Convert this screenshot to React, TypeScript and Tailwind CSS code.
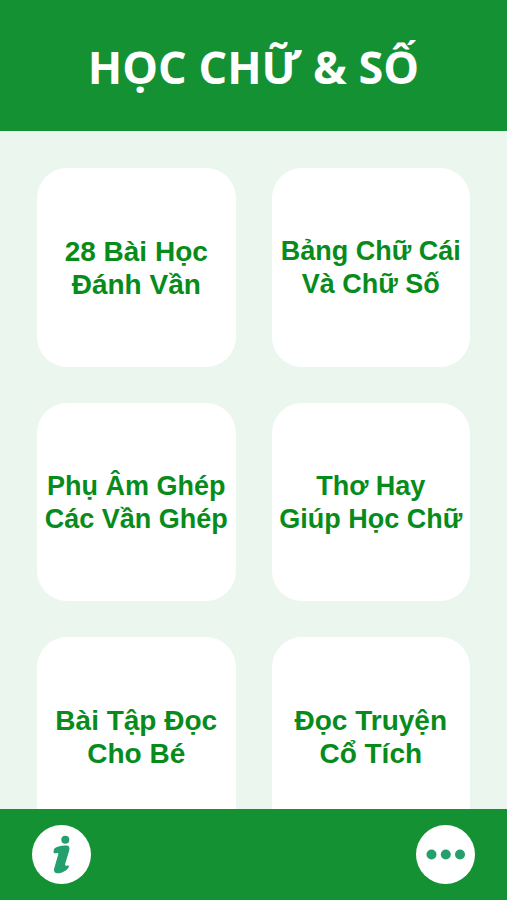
type Lesson = { lines: [string, string]; wide?: boolean };

const lessons: Lesson[] = [
  { lines: ["28 Bài Học", "Đánh Vần"] },
  { lines: ["Bảng Chữ Cái", "Và Chữ Số"], wide: true },
  { lines: ["Phụ Âm Ghép", "Các Vần Ghép"], wide: true },
  { lines: ["Thơ Hay", "Giúp Học Chữ"], wide: true },
  { lines: ["Bài Tập Đọc", "Cho Bé"] },
  { lines: ["Đọc Truyện", "Cổ Tích"] },
];

function LessonCard({ lines, wide }: Lesson) {
  const size = wide ? "text-[27px]" : "text-[28px]";
  return (
    <button
      type="button"
      className={`flex aspect-square flex-col items-center justify-center rounded-[30px] bg-white pt-[2px] leading-[33px] font-bold whitespace-nowrap text-[#078c1c] ${size}`}
    >
      <span>{lines[0]}</span>
      <span>{lines[1]}</span>
    </button>
  );
}

function InfoIcon() {
  return (
    <svg viewBox="0 0 59 59" className="size-full" fill="#23a06c" aria-hidden="true">
      <circle cx="33.3" cy="14.8" r="4" />
      <path d="M23 23C26 20.8 31.5 20 35.2 20.6C37.3 21.1 37.8 23 37.2 25.4L33.2 38.8C32.9 40.4 33.6 40.9 34.6 40.7C36 40.5 37.4 40.6 36.8 42C35.3 45.6 29 48.8 24.8 48.2C22 47.6 21.6 45.3 22.3 43L26.2 29.4C26.5 28.3 26 27.9 25 28.1C23.3 28.5 21.7 28.6 21.6 26.9C21.5 25.5 22 24 23 23Z" />
    </svg>
  );
}

function MoreIcon() {
  return (
    <svg viewBox="0 0 59 59" className="size-full" fill="#23a06c" aria-hidden="true">
      <circle cx="15.5" cy="29.5" r="5" />
      <circle cx="29.8" cy="29.5" r="5" />
      <circle cx="44" cy="29.5" r="5" />
    </svg>
  );
}

export default function App() {
  return (
    <div className="flex h-screen flex-col bg-[#eaf6ee] font-['Liberation_Sans',Arial,sans-serif]">
      <header className="flex h-[131px] shrink-0 items-center justify-center bg-[#149133] pt-[2px]">
        <h1 className="font-['Open_Sans','Noto_Sans',sans-serif] text-[45px] leading-[64px] font-bold whitespace-nowrap text-white">
          HỌC CHỮ &amp; SỐ
        </h1>
      </header>

      <main className="min-h-0 flex-1 overflow-y-auto p-[37px] [scrollbar-width:none]">
        <div className="grid grid-cols-2 gap-9">
          {lessons.map((lesson) => (
            <LessonCard key={lesson.lines[0]} {...lesson} />
          ))}
        </div>
      </main>

      <footer className="flex h-[91px] shrink-0 items-center justify-between bg-[#149133] px-8">
        <button type="button" aria-label="Thông tin" className="size-[59px] rounded-full bg-white">
          <InfoIcon />
        </button>
        <button type="button" aria-label="Thêm" className="size-[59px] rounded-full bg-white">
          <MoreIcon />
        </button>
      </footer>
    </div>
  );
}
